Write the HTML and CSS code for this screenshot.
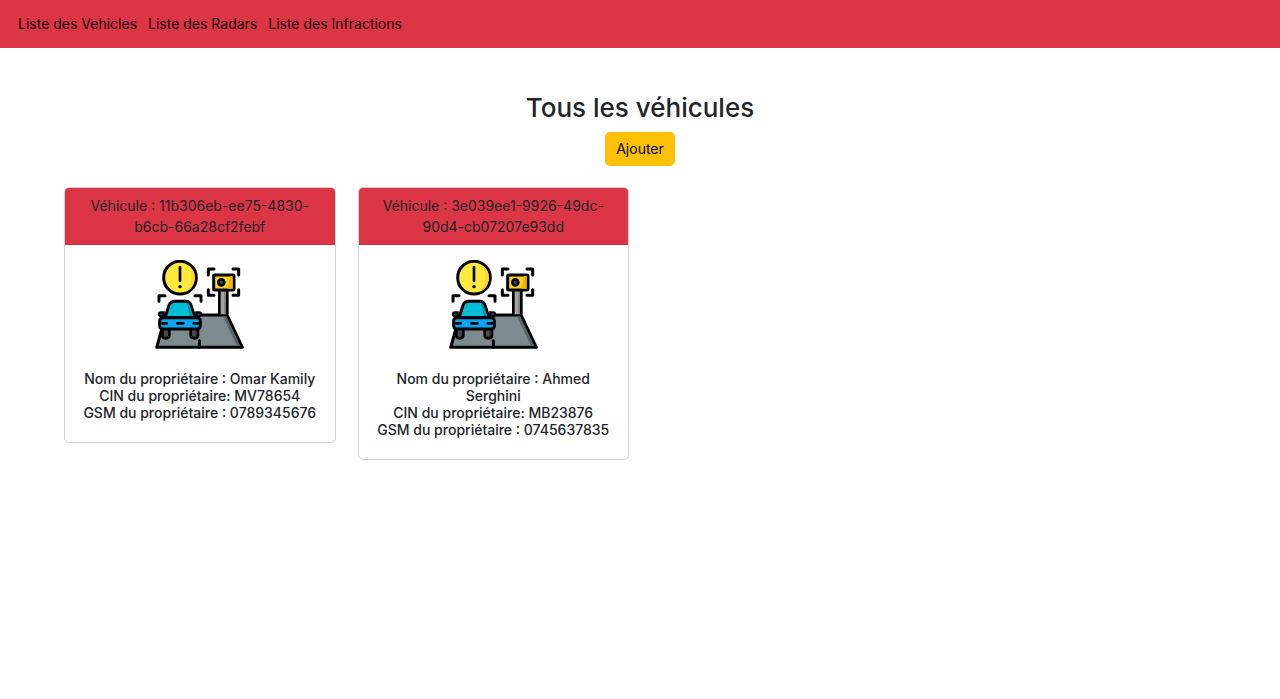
FILE: index.html
```html
<!DOCTYPE html>
<html lang="fr">
<head>
<meta charset="utf-8">
<meta name="viewport" content="width=device-width, initial-scale=1">
<title>Tous les véhicules</title>
<link rel="stylesheet" href="styles.css">
</head>
<body>
<svg class="sprite" aria-hidden="true">
  <symbol id="radar" viewBox="32 29 267 267">
    <!-- road -->
    <path d="M64 194H248L294 291H37Z" fill="#7d8a90" stroke="#000" stroke-width="9" stroke-linejoin="round"/>
    <path d="M236 198H246L288 287H278Z" fill="#56636a"/>
    <path d="M165 271V291" stroke="#000" stroke-width="9" stroke-linecap="round"/>
    <!-- camera pole -->
    <path d="M226 118H248V192H226Z" fill="#a3a3a3"/>
    <path d="M240 122H248V190H240Z" fill="#7c7c7c"/>
    <path d="M225 118V192M249 118V192" stroke="#000" stroke-width="8"/>
    <!-- camera -->
    <rect x="208" y="74" width="61" height="45" rx="3" fill="#ffd21c" stroke="#000" stroke-width="9"/>
    <path d="M257 78H265V115H249Z" fill="#f5b400"/>
    <circle cx="231" cy="96" r="9" fill="#44546b" stroke="#000" stroke-width="8"/>
    <path d="M192 74V56H209M266 56H283V74M192 118V135H209M266 135H283V118M44 153V136H62M152 136H170V153" fill="none" stroke="#000" stroke-width="9" stroke-linecap="round" stroke-linejoin="round"/>
    <!-- alert -->
    <circle cx="107" cy="82" r="49" fill="#ffe93b" stroke="#000" stroke-width="9"/>
    <path d="M132 45A46 46 0 0 1 121 126A64 64 0 0 0 132 45Z" fill="#fbd92b"/>
    <path d="M107 50V92" stroke="#000" stroke-width="8" stroke-linecap="round"/>
    <circle cx="107" cy="109" r="5"/>
    <!-- car -->
    <path d="M54 234H75V255Q75 264 64 264Q54 264 54 255ZM139 234H161V255Q161 264 150 264Q139 264 139 255Z" fill="#45494d" stroke="#000" stroke-width="8"/>
    <path d="M58 186H50Q44 186 44 192Q45 199 58 199ZM156 186H164Q170 186 170 192Q169 199 156 199Z" fill="#3547a5" stroke="#000" stroke-width="7"/>
    <path d="M62 202L74 165Q79 153 91 153H124Q136 153 140 165L152 202Z" fill="#00bcd4" stroke="#000" stroke-width="9" stroke-linejoin="round"/>
    <path d="M128 157Q134 158 137 167L147 198H137Z" fill="#0092a8"/>
    <rect x="46" y="202" width="122" height="34" rx="9" fill="#08a5f4" stroke="#000" stroke-width="9"/>
    <path d="M54 219H67M99 219H117M148 219H161" stroke="#000" stroke-width="8" stroke-linecap="round"/>
  </symbol>
</svg>
<nav class="navbar">
  <a class="nav-link" href="#">Liste des Vehicles</a>
  <a class="nav-link" href="#">Liste des Radars</a>
  <a class="nav-link" href="#">Liste des Infractions</a>
</nav>
<main class="page">
  <header class="intro">
    <h1 class="title">Tous les véhicules</h1>
    <button class="add-button" type="button">Ajouter</button>
  </header>
  <div class="cards">
    <article class="card">
      <div class="card-header">Véhicule : 11b306eb-ee75-4830-b6cb-66a28cf2febf</div>
      <div class="card-body">
        <svg class="card-icon" aria-hidden="true"><use href="#radar"/></svg>
        <h2 class="owner">Nom du propriétaire : Omar Kamily<br>CIN du propriétaire: MV78654<br>GSM du propriétaire : 0789345676</h2>
      </div>
    </article>
    <article class="card">
      <div class="card-header">Véhicule : 3e039ee1-9926-49dc-90d4-cb07207e93dd</div>
      <div class="card-body">
        <svg class="card-icon" aria-hidden="true"><use href="#radar"/></svg>
        <h2 class="owner">Nom du propriétaire : Ahmed Serghini<br>CIN du propriétaire: MB23876<br>GSM du propriétaire : 0745637835</h2>
      </div>
    </article>
  </div>
</main>
</body>
</html>
```
FILE: styles.css
```css
* { box-sizing: border-box; }

body {
  margin: 0;
  background: #fff;
  color: #212529;
  font-family: Inter, "Liberation Sans", sans-serif;
  font-size: 14px;
  line-height: 21px;
}

.sprite { display: none; }

.navbar {
  display: flex;
  gap: 11px;
  padding: 13px 18px 14px;
  background: #dc3545;
}

.nav-link { color: #1a0608; text-decoration: none; }

.page { padding: 43px 64px; }

.intro {
  display: flex;
  flex-direction: column;
  align-items: center;
  gap: 7px;
  margin-bottom: 21px;
}

.title {
  margin: 0;
  font-size: 26px;
  font-weight: 500;
  line-height: 34px;
}

.add-button {
  padding: 6px 11px 7px;
  border: 0;
  border-radius: 5px;
  background: #ffc107;
  color: #000;
  font: inherit;
}

.cards {
  display: grid;
  grid-template-columns: repeat(4, 1fr);
  align-items: start;
  gap: 22px;
}

.card {
  overflow: hidden;
  border: 1px solid #d3d3d4;
  border-radius: 5px;
  text-align: center;
}

.card-header {
  padding: 7px 14px;
  border-bottom: 1px solid #c23040;
  background: #dc3545;
}

.card-body { padding: 15px 14px 21px; }

.card-icon {
  display: block;
  width: 89px;
  height: 89px;
  margin: 0 auto 21px;
}

.owner {
  margin: 0;
  font-size: 14px;
  font-weight: 500;
  line-height: 17px;
}
```
